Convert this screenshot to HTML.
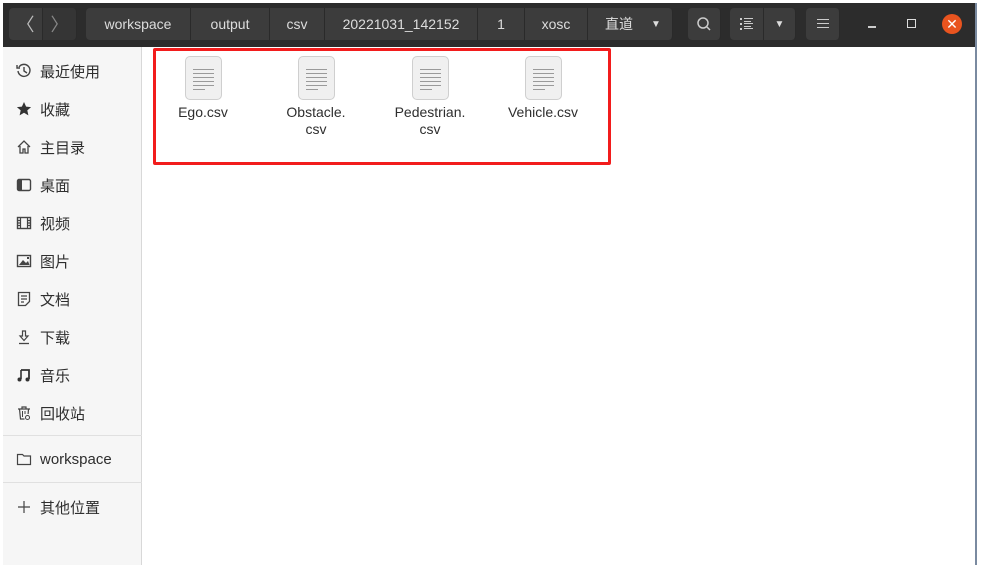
<!DOCTYPE html>
<html><head><meta charset="utf-8"><style>
*{margin:0;padding:0;box-sizing:border-box}
body{width:989px;height:576px;background:#fff;position:relative;overflow:hidden;font-family:"Liberation Sans","Noto Sans CJK SC",sans-serif}
.hdr{position:absolute;left:3px;top:3px;width:973px;height:44px;background:#2c2c2c}
.b{position:absolute;top:8px;height:32px;background:#3c3c3c;color:#ddd;font-size:14px;display:flex;align-items:center;justify-content:center;border-right:1px solid #2a2a2a}
.side{position:absolute;left:3px;top:47px;width:139px;height:518px;background:#f6f6f6;border-right:1px solid #d8d8d8}
.it{position:absolute;left:16px;font-size:15px;color:#2e2e2e;display:flex;align-items:center;height:20px}
.it svg{width:16px;height:16px;margin-right:8px;flex:none}
.sep{position:absolute;left:3px;width:139px;height:1px;background:#e0e0e0}
.main{position:absolute;left:143px;top:47px;width:832px;height:518px;background:#fff}
.vline{position:absolute;left:975px;top:3px;width:2px;height:562px;background:#7a8aa0}
.red{position:absolute;left:153px;top:48px;width:458px;height:117px;border:3px solid #f21c1c;border-radius:2px}
.f{position:absolute;top:56px;width:120px;text-align:center;font-size:14px;color:#2e2e2e;line-height:17px}
.doc{width:37px;height:44px;margin:0 auto 4px;border:1px solid #cfcfcf;border-radius:5px;background:#f0f0f0;padding:12px 7px 0}
.doc i{display:block;height:1px;background:#9a9a9a;margin-bottom:3px}
</style></head><body>
<div class="hdr"></div>
<div class="b" style="left:9px;width:34px;border-radius:4px 0 0 4px;font-size:18px;color:#bbb">〈</div>
<div class="b" style="left:43px;width:34px;border-radius:0 4px 4px 0;font-size:18px;color:#888;background:#353535">〉</div>
<div class="b" style="left:86px;width:105px;border-radius:4px 0 0 4px">workspace</div>
<div class="b" style="left:191px;width:79px">output</div>
<div class="b" style="left:270px;width:55px">csv</div>
<div class="b" style="left:325px;width:153px">20221031_142152</div>
<div class="b" style="left:478px;width:47px">1</div>
<div class="b" style="left:525px;width:63px">xosc</div>
<div class="b" style="left:588px;width:85px;border-radius:0 4px 4px 0;justify-content:flex-start;padding-left:17px">直道<span style="margin-left:18px;font-size:10px">▼</span></div>
<div class="b" style="left:688px;width:33px;border-radius:4px"><svg width="16" height="16"><circle cx="7" cy="7" r="5" fill="none" stroke="#ccc" stroke-width="1.5"/><line x1="11" y1="11" x2="14" y2="14" stroke="#ccc" stroke-width="1.5"/></svg></div>
<div class="b" style="left:730px;width:34px;border-radius:4px 0 0 4px"><svg width="14" height="12"><g fill="#ccc"><rect x="0" y="0" width="2" height="2"/><rect x="0" y="5" width="2" height="2"/><rect x="0" y="10" width="2" height="2"/><rect x="4" y="0" width="9" height="1"/><rect x="4" y="3" width="7" height="1"/><rect x="4" y="5" width="9" height="1"/><rect x="4" y="8" width="7" height="1"/><rect x="4" y="10" width="9" height="1"/></g></svg></div>
<div class="b" style="left:764px;width:32px;border-radius:0 4px 4px 0;font-size:10px">▼</div>
<div class="b" style="left:806px;width:34px;border-radius:4px"><svg width="12" height="10"><g fill="#ccc"><rect y="0" width="12" height="1"/><rect y="4" width="12" height="1"/><rect y="8" width="12" height="1"/></g></svg></div>
<div style="position:absolute;left:868px;top:26px;width:8px;height:1.5px;background:#ccc"></div>
<div style="position:absolute;left:907px;top:19px;width:9px;height:9px;border:1.5px solid #ddd"></div>
<div style="position:absolute;left:942px;top:14px;width:20px;height:20px;border-radius:50%;background:#e9541f;color:#fff;font-size:14px;text-align:center;line-height:20px">✕</div>

<div class="side"></div>
<div class="it" style="top:61px"><svg viewBox="0 0 16 16"><path d="M3 4A6 6 0 1 1 2 8" fill="none" stroke="#444" stroke-width="1.4"/><path d="M1 2v3h3" fill="none" stroke="#444" stroke-width="1.4"/><path d="M8 4v4l3 2" fill="none" stroke="#444" stroke-width="1.4"/></svg>最近使用</div>
<div class="it" style="top:99px"><svg viewBox="0 0 16 16"><path d="M8 1l2.1 4.6 5 .5-3.8 3.3 1.1 5L8 11.8 3.6 14.4l1.1-5L.9 6.1l5-.5z" fill="#333"/></svg>收藏</div>
<div class="it" style="top:137px"><svg viewBox="0 0 16 16"><path d="M2 8L8 2l6 6M4 7v7h3v-4h2v4h3V7" fill="none" stroke="#444" stroke-width="1.3"/></svg>主目录</div>
<div class="it" style="top:175px"><svg viewBox="0 0 16 16"><rect x="1.5" y="2.5" width="13" height="11" rx="1.5" fill="none" stroke="#444" stroke-width="1.4"/><rect x="2" y="3" width="4" height="10" fill="#444"/></svg>桌面</div>
<div class="it" style="top:213px"><svg viewBox="0 0 16 16"><rect x="1.5" y="2.5" width="13" height="11" fill="none" stroke="#444" stroke-width="1.4"/><path d="M4.5 3v10M11.5 3v10M2 8h2.5M11.5 8H14M2 5.5h2.5M2 10.5h2.5M11.5 5.5H14M11.5 10.5H14" stroke="#444" stroke-width="1.2"/></svg>视频</div>
<div class="it" style="top:251px"><svg viewBox="0 0 16 16"><rect x="1.5" y="2.5" width="13" height="11" fill="none" stroke="#444" stroke-width="1.4"/><path d="M3 12l4-5 3 3 2-2 1.5 4z" fill="#444"/><rect x="11" y="4" width="2" height="2" fill="#444"/></svg>图片</div>
<div class="it" style="top:289px"><svg viewBox="0 0 16 16"><path d="M2.5 1.5h11v9l-4 4h-7z" fill="none" stroke="#444" stroke-width="1.3"/><path d="M5 5h6M5 8h6M5 11h3" stroke="#444" stroke-width="1.2"/></svg>文档</div>
<div class="it" style="top:327px"><svg viewBox="0 0 16 16"><path d="M6.5 2h3v5h2.5L8 11.5 4 7h2.5z" fill="none" stroke="#444" stroke-width="1.2"/><path d="M3 14.5h10" stroke="#444" stroke-width="1.3"/></svg>下载</div>
<div class="it" style="top:365px"><svg viewBox="0 0 16 16"><path d="M5 3h8v9" fill="none" stroke="#333" stroke-width="1.8"/><path d="M5 3v9" stroke="#333" stroke-width="1.6"/><circle cx="3.5" cy="12.5" r="2" fill="#333"/><circle cx="11.5" cy="12.5" r="2" fill="#333"/></svg>音乐</div>
<div class="it" style="top:403px"><svg viewBox="0 0 16 16"><path d="M2 4h12M6 4V2h4v2M3.5 4l1 10h4M12.5 4l-.4 5" fill="none" stroke="#444" stroke-width="1.2"/><path d="M6.5 6v6M9 6v3" stroke="#444"/><circle cx="11.5" cy="12.5" r="2" fill="none" stroke="#444"/></svg>回收站</div>
<div class="sep" style="top:435px"></div>
<div class="it" style="top:449px"><svg viewBox="0 0 16 16"><path d="M1.5 3.5h5l1.5 1.5h6.5v8.5h-13z" fill="none" stroke="#444" stroke-width="1.2"/></svg>workspace</div>
<div class="sep" style="top:482px"></div>
<div class="it" style="top:497px"><svg viewBox="0 0 16 16"><path d="M8 2v12M2 8h12" stroke="#444" stroke-width="1.2"/></svg>其他位置</div>

<div class="main"></div>
<div class="vline"></div>
<div class="red"></div>
<div class="f" style="left:143px"><div class="doc"><i></i><i></i><i></i><i></i><i></i><i style="width:60%"></i></div>Ego.csv</div>
<div class="f" style="left:256px"><div class="doc"><i></i><i></i><i></i><i></i><i></i><i style="width:60%"></i></div>Obstacle.<br>csv</div>
<div class="f" style="left:370px"><div class="doc"><i></i><i></i><i></i><i></i><i></i><i style="width:60%"></i></div>Pedestrian.<br>csv</div>
<div class="f" style="left:483px"><div class="doc"><i></i><i></i><i></i><i></i><i></i><i style="width:60%"></i></div>Vehicle.csv</div>
</body></html>
